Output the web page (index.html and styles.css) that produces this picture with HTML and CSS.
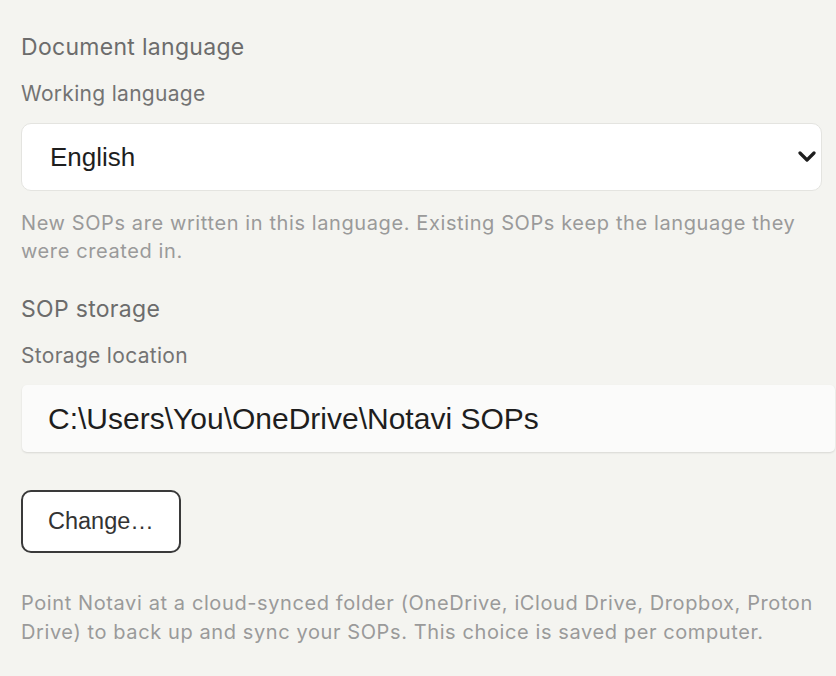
FILE: index.html
```html
<!DOCTYPE html>
<html lang="en">
<head>
    <meta charset="UTF-8" />
    <meta name="viewport" content="width=device-width, initial-scale=1.0"/>
    <title>Settings</title>
    <link rel="stylesheet" href="styles.css">
</head>
<body>
    <div class="settings">
        <h2 class="section-title">Document language</h2>
        <label class="field-label" for="working-language">Working language</label>
        <div class="select-wrap">
            <select id="working-language" class="select">
                <option>English</option>
                <option>Deutsch</option>
                <option>Français</option>
            </select>
            <svg class="select-arrow" width="18" height="12" viewBox="0 0 18 12">
                <path d="M2 2 L9 9 L16 2" fill="none" stroke="#1e1e1e" stroke-width="3.2" stroke-linecap="round" stroke-linejoin="round"/>
            </svg>
        </div>
        <p class="help">New SOPs are written in this language. Existing SOPs keep the language they were created in.</p>

        <h2 class="section-title section-title--next">SOP storage</h2>
        <label class="field-label" for="storage-location">Storage location</label>
        <input id="storage-location" class="path-input" type="text" value="C:\Users\You\OneDrive\Notavi SOPs" readonly>
        <button class="btn" type="button">Change…</button>
        <p class="help help--last">Point Notavi at a cloud-synced folder (OneDrive, iCloud Drive, Dropbox, Proton Drive) to back up and sync your SOPs. This choice is saved per computer.</p>
    </div>
</body>
</html>
```

FILE: styles.css
```css
body {
    margin: 0;
    padding: 0;
    background-color: #f4f4f0;
    font-family: 'Inter', 'Noto Sans', sans-serif;
    overflow: hidden;
}

.settings {
    padding: 33px 14px 0 21px;
    display: flex;
    flex-direction: column;
    align-items: flex-start;
}

.section-title {
    margin: 0;
    font-size: 23px;
    line-height: 28px;
    font-weight: 400;
    letter-spacing: 0.3px;
    color: #6c6c6c;
}

.section-title--next {
    margin-top: 30px;
}

.field-label {
    margin-top: 20px;
    font-size: 21px;
    line-height: 26px;
    letter-spacing: 0.3px;
    color: #737373;
}

.select-wrap {
    position: relative;
    margin-top: 16px;
    width: 100%;
}

.select {
    display: block;
    width: 100%;
    height: 68px;
    margin: 0;
    padding: 0 40px 0 28px;
    box-sizing: border-box;
    appearance: none;
    -webkit-appearance: none;
    background-color: #fff;
    border: 1px solid #e4e4e0;
    border-radius: 10px;
    font-family: 'Liberation Sans', Arial, sans-serif;
    font-size: 26px;
    color: #1e1e1e;
    outline: none;
}

.select-arrow {
    position: absolute;
    right: 6px;
    top: 28px;
    pointer-events: none;
}

.help {
    margin: 18px 0 0;
    font-size: 20px;
    line-height: 28px;
    letter-spacing: 0.6px;
    color: #9a9a9a;
}

.help--last {
    margin-top: 36px;
    line-height: 29px;
}

.path-input {
    display: block;
    width: calc(100% + 12px);
    height: 67px;
    margin: 16px 0 0 1px;
    padding: 0 0 0 26px;
    box-sizing: border-box;
    background-color: #fbfbfa;
    border: none;
    border-radius: 5px;
    box-shadow: 0 1px 2px rgba(0, 0, 0, 0.12);
    font-family: 'Liberation Sans', Arial, sans-serif;
    font-size: 30px;
    color: #1e1e1e;
    outline: none;
}

.btn {
    margin-top: 38px;
    height: 63px;
    padding: 0 25px;
    background-color: #fff;
    border: 2px solid #3a3a3a;
    border-radius: 10px;
    font-family: 'Liberation Sans', Arial, sans-serif;
    font-size: 23.5px;
    color: #333;
    cursor: pointer;
}
```
